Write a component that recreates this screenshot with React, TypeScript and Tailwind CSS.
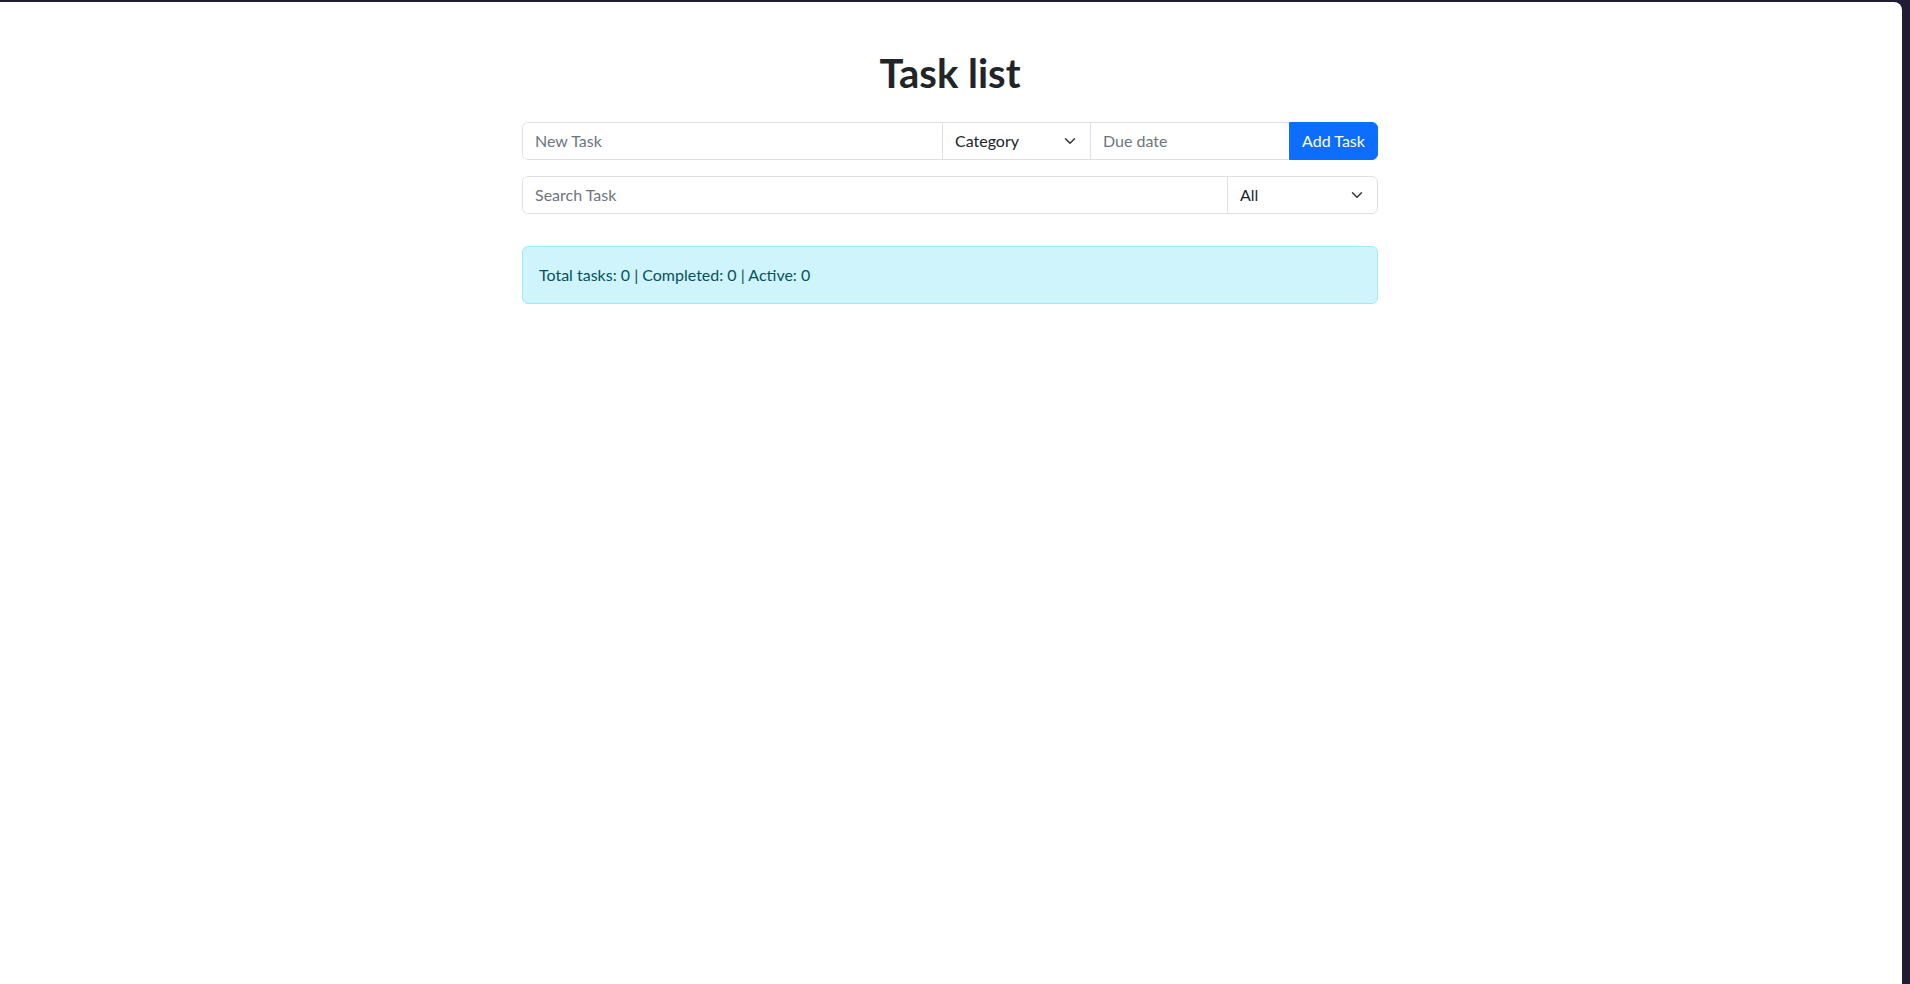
import React from "react";

const Chevron = () => (
  <svg width="16" height="12" viewBox="0 0 16 16" className="shrink-0" aria-hidden="true">
    <path d="m2 5 6 6 6-6" fill="none" stroke="#343a40" strokeWidth="2" strokeLinecap="round" strokeLinejoin="round" />
  </svg>
);

export default function App() {
  const font = { fontFamily: '"Segoe UI", Lato, "Noto Sans", sans-serif' };
  return (
    <div className="h-[984px] w-full bg-[#221b34] pt-[2px] pr-[8px]" style={font}>
      <div className="h-[982px] w-full bg-white rounded-tr-[8px] overflow-hidden text-[#212529] pr-[2px]">
        <div className="mx-auto w-[856px] pt-[47px]">
          <h1 className="text-center text-[40px] leading-[48px] font-bold mb-[25px] text-[#212529]">Task list</h1>

          <div className="flex h-[38px] text-[16px] leading-[24px]">
            <div className="flex-1 flex items-center px-3 border border-[#dee2e6] rounded-l-[6px] text-[#6c757d]">New Task</div>
            <div className="w-[149px] -ml-px flex items-center justify-between pl-3 pr-3 border border-[#dee2e6] text-[#212529]">
              <span>Category</span>
              <Chevron />
            </div>
            <div className="w-[200px] -ml-px flex items-center px-3 border border-[#dee2e6] text-[#6c757d]">Due date</div>
            <div className="w-[89px] -ml-px flex items-center justify-center bg-[#0d6efd] border border-[#0d6efd] rounded-r-[6px] text-white">Add Task</div>
          </div>

          <div className="flex h-[38px] mt-[16px] text-[16px] leading-[24px]">
            <div className="flex-1 flex items-center px-3 border border-[#dee2e6] rounded-l-[6px] text-[#6c757d]">Search Task</div>
            <div className="w-[151px] -ml-px flex items-center justify-between px-3 border border-[#dee2e6] rounded-r-[6px] text-[#212529]">
              <span>All</span>
              <Chevron />
            </div>
          </div>

          <div className="mt-[32px] h-[58px] flex items-center px-4 bg-[#cff4fc] border border-[#9eeaf9] rounded-[6px] text-[#055160] text-[16px] leading-[24px]">
            Total tasks: 0 | Completed: 0 | Active: 0
          </div>
        </div>
      </div>
    </div>
  );
}
